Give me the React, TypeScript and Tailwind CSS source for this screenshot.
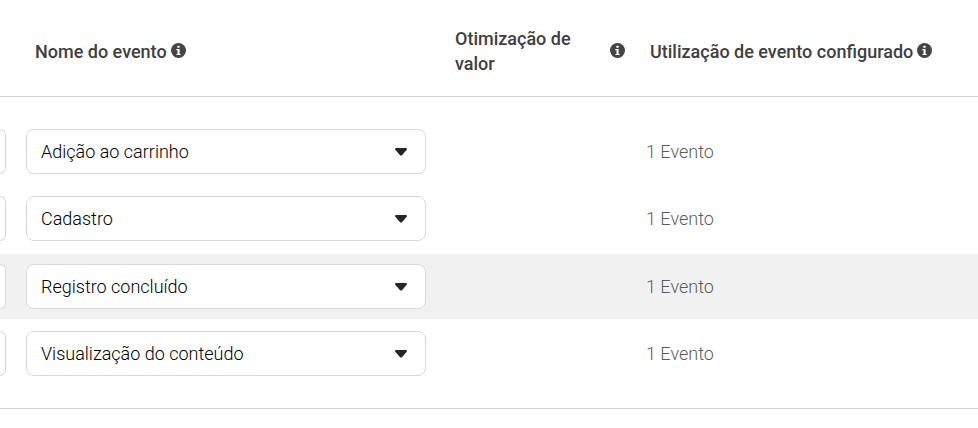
const EVENTS = [
  { name: 'Adição ao carrinho', usage: '1 Evento', highlighted: false },
  { name: 'Cadastro', usage: '1 Evento', highlighted: false },
  { name: 'Registro concluído', usage: '1 Evento', highlighted: true },
  { name: 'Visualização do conteúdo', usage: '1 Evento', highlighted: false },
]

function InfoIcon() {
  return (
    <svg viewBox="0 0 15 15" className="mb-[2px] size-[15px] shrink-0" aria-hidden="true">
      <circle cx="7.5" cy="7.5" r="7.5" fill="#444444" />
      <rect x="6.4" y="2.8" width="2.2" height="1.9" rx="0.5" fill="#ffffff" />
      <path d="M5.3 6.1h3.3v4.9h1v1H5.4v-1h1.1V7.2H5.3z" fill="#ffffff" />
    </svg>
  )
}

function CaretIcon() {
  return (
    <svg
      viewBox="0 0 12 8"
      className="pointer-events-none absolute top-[19px] right-[19px] h-2 w-3"
      aria-hidden="true"
    >
      <path
        d="M1.1 0h9.8c.9 0 1.4 1.1.8 1.8L7.2 7c-.7.8-1.7.8-2.4 0L.3 1.8C-.3 1.1.2 0 1.1 0z"
        fill="#262626"
      />
    </svg>
  )
}

export default function App() {
  return (
    <div className="border-b border-[#d6d6d6] bg-white pb-[19px] font-[Roboto,sans-serif] text-lg leading-[25px]">
      <table className="w-full table-fixed border-separate border-spacing-0">
        <colgroup>
          <col className="w-[26px]" />
          <col className="w-[420px]" />
          <col className="w-[195px]" />
          <col />
        </colgroup>
        <thead className="text-left text-[#404040]">
          <tr>
            <td className="border-b border-[#d6d6d6]" />
            <th className="border-b border-[#d6d6d6] pt-[26px] pb-5 pl-[9px] font-medium">
              <div className="flex items-center gap-1">
                Nome do evento
                <InfoIcon />
              </div>
            </th>
            <th className="border-b border-[#d6d6d6] pt-[26px] pr-4 pb-5 pl-[9px] font-medium">
              <div className="flex items-center justify-between gap-7">
                <span>Otimização de valor</span>
                <InfoIcon />
              </div>
            </th>
            <th className="border-b border-[#d6d6d6] pt-[26px] pb-5 pl-[9px] font-medium">
              <div className="flex items-center gap-1 whitespace-nowrap">
                Utilização de evento configurado
                <InfoIcon />
              </div>
            </th>
          </tr>
        </thead>
        <tbody className="font-light before:block before:h-[22px] [&_td]:border-b-2 [&_td]:border-transparent [&_td]:bg-clip-padding [&_td]:py-[10px] [&_td]:align-top">
          {EVENTS.map((event) => (
            <tr
              key={event.name}
              className={event.highlighted ? 'h-[67px] [&_td]:bg-[#f1f1f1]' : 'h-[67px] even:h-[68px]'}
            >
              <td className="pr-5">
                <select
                  aria-label="Origem"
                  className="block h-[45px] w-full appearance-none rounded-r-lg border border-l-0 border-[#d9d9d9] bg-white"
                />
              </td>
              <td className="pr-5">
                <div className="relative">
                  <select
                    aria-label="Nome do evento"
                    defaultValue={event.name}
                    className="block h-[45px] w-full appearance-none rounded-lg border border-[#d9d9d9] bg-white pr-10 pl-[14px] text-black"
                  >
                    {EVENTS.map((option) => (
                      <option key={option.name}>{option.name}</option>
                    ))}
                  </select>
                  <CaretIcon />
                </div>
              </td>
              <td />
              <td className="pl-[5px] text-[#5c5c5c]">
                <div className="flex h-[45px] items-center">{event.usage}</div>
              </td>
            </tr>
          ))}
        </tbody>
      </table>
    </div>
  )
}
